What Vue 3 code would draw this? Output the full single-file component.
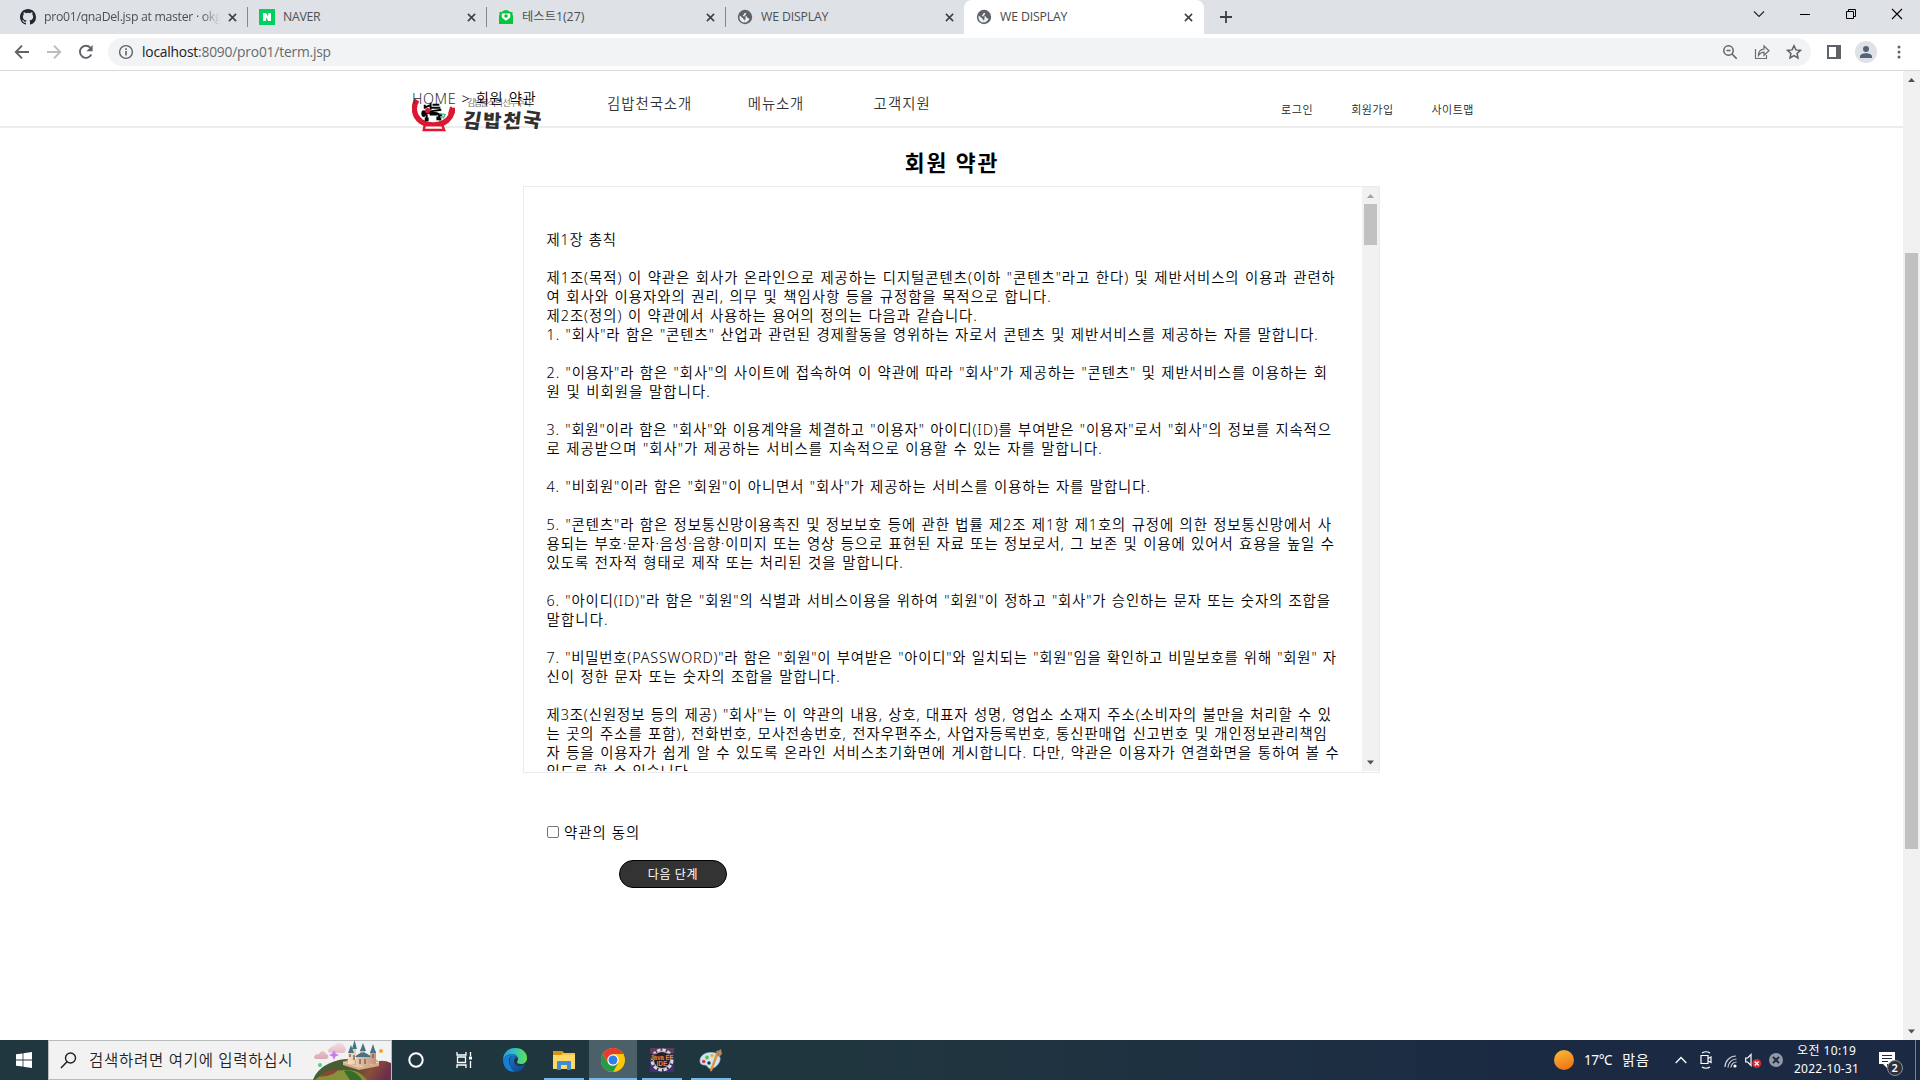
<script setup>
const tabs = [
  { icon: 'github', title: 'pro01/qnaDel.jsp at master · okg', width: 177, fade: true },
  { icon: 'naver', title: 'NAVER', width: 37 },
  { icon: 'mail', title: '테스트1(27)', width: 62 },
  { icon: 'globe', title: 'WE DISPLAY', width: 67 },
  { icon: 'globe', title: 'WE DISPLAY', width: 67, active: true },
]

const terms = [
  ['제1장 총칙', 70],
  ['', 0],
  ['제1조(목적) 이 약관은 회사가 온라인으로 제공하는 디지털콘텐츠(이하 "콘텐츠"라고 한다) 및 제반서비스의 이용과 관련하', 789],
  ['여 회사와 이용자와의 권리, 의무 및 책임사항 등을 규정함을 목적으로 합니다.', 505],
  ['제2조(정의) 이 약관에서 사용하는 용어의 정의는 다음과 같습니다.', 431],
  ['1. "회사"라 함은 "콘텐츠" 산업과 관련된 경제활동을 영위하는 자로서 콘텐츠 및 제반서비스를 제공하는 자를 말합니다.', 772],
  ['', 0],
  ['2. "이용자"라 함은 "회사"의 사이트에 접속하여 이 약관에 따라 "회사"가 제공하는 "콘텐츠" 및 제반서비스를 이용하는 회', 781],
  ['원 및 비회원을 말합니다.', 164],
  ['', 0],
  ['3. "회원"이라 함은 "회사"와 이용계약을 체결하고 "이용자" 아이디(ID)를 부여받은 "이용자"로서 "회사"의 정보를 지속적으', 785],
  ['로 제공받으며 "회사"가 제공하는 서비스를 지속적으로 이용할 수 있는 자를 말합니다.', 556],
  ['', 0],
  ['4. "비회원"이라 함은 "회원"이 아니면서 "회사"가 제공하는 서비스를 이용하는 자를 말합니다.', 604],
  ['', 0],
  ['5. "콘텐츠"라 함은 정보통신망이용촉진 및 정보보호 등에 관한 법률 제2조 제1항 제1호의 규정에 의한 정보통신망에서 사', 785],
  ['용되는 부호·문자·음성·음향·이미지 또는 영상 등으로 표현된 자료 또는 정보로서, 그 보존 및 이용에 있어서 효용을 높일 수', 788],
  ['있도록 전자적 형태로 제작 또는 처리된 것을 말합니다.', 357],
  ['', 0],
  ['6. "아이디(ID)"라 함은 "회원"의 식별과 서비스이용을 위하여 "회원"이 정하고 "회사"가 승인하는 문자 또는 숫자의 조합을', 784],
  ['말합니다.', 62],
  ['', 0],
  ['7. "비밀번호(PASSWORD)"라 함은 "회원"이 부여받은 "아이디"와 일치되는 "회원"임을 확인하고 비밀보호를 위해 "회원" 자', 790],
  ['신이 정한 문자 또는 숫자의 조합을 말합니다.', 294],
  ['', 0],
  ['제3조(신원정보 등의 제공) "회사"는 이 약관의 내용, 상호, 대표자 성명, 영업소 소재지 주소(소비자의 불만을 처리할 수 있', 785],
  ['는 곳의 주소를 포함), 전화번호, 모사전송번호, 전자우편주소, 사업자등록번호, 통신판매업 신고번호 및 개인정보관리책임', 781],
  ['자 등을 이용자가 쉽게 알 수 있도록 온라인 서비스초기화면에 게시합니다. 다만, 약관은 이용자가 연결화면을 통하여 볼 수', 793],
  ['있도록 할 수 있습니다.', 146],
]

// Tracks a single line of text so that it fills the given width.
const vFit = {
  mounted(el, { value }) {
    const count = [...el.textContent].length
    if (!value || !count) return
    const natural = el.getBoundingClientRect().width
    const current = parseFloat(getComputedStyle(el).letterSpacing) || 0
    el.style.letterSpacing = `${current + (value + 0.3 - natural) / count}px`
  },
}
</script>

<template>
  <div class="screen">
    <header class="tabstrip">
      <div v-for="(tab, i) in tabs" :key="i" class="tab" :class="{ active: tab.active, plain: i === 3 }">
        <svg v-if="tab.icon === 'github'" class="fav" viewBox="0 0 16 16"><path fill="#24292f" d="M8 0C3.58 0 0 3.58 0 8c0 3.54 2.29 6.53 5.47 7.59.4.07.55-.17.55-.38 0-.19-.01-.82-.01-1.49-2.01.37-2.53-.49-2.69-.94-.09-.23-.48-.94-.82-1.13-.28-.15-.68-.52-.01-.53.63-.01 1.08.58 1.23.82.72 1.21 1.87.87 2.33.66.07-.52.28-.87.51-1.07-1.78-.2-3.64-.89-3.64-3.95 0-.87.31-1.59.82-2.15-.08-.2-.36-1.02.08-2.12 0 0 .67-.21 2.2.82a7.6 7.6 0 0 1 4 0c1.53-1.04 2.2-.82 2.2-.82.44 1.1.16 1.92.08 2.12.51.56.82 1.27.82 2.15 0 3.07-1.87 3.75-3.65 3.95.29.25.54.73.54 1.48 0 1.07-.01 1.93-.01 2.2 0 .21.15.46.55.38A8.01 8.01 0 0 0 16 8c0-4.42-3.58-8-8-8z"/></svg>
        <svg v-else-if="tab.icon === 'naver'" class="fav" viewBox="0 0 16 16"><path fill="#03cf5d" d="M0 0h16v16H0z"/><path fill="#fff" d="M4 4h3l2.200 3.600V4H12v8H9.200L7 8.400V12H4z"/></svg>
        <svg v-else-if="tab.icon === 'mail'" class="fav" viewBox="0 0 16 16"><path fill="#03c63c" d="M1.500 3h2.200Q6 1 8 1t4.300 2h2.200v3l.5.500V15H1V6.500l.5-.5z"/><path d="M3.800 4.500h8.400v4L8 11.700 3.800 8.500z" fill="#fff"/><circle cx="8" cy="7" r="1.800" fill="#03c63c"/></svg>
        <svg v-else class="fav" viewBox="0 0 16 16"><circle cx="8" cy="8" r="7.200" fill="#5f6368"/><path fill="#eceef0" d="M9.500 2.300c0 1.400-.6 1.900-1.900 2-.9.200-.3 1.300-1.200 1.600-.8.300-.6 1.300.2 1.300h2.700c.9 0 .7 1.700 1.600 1.700.9 0 .9.800 1.700.9-.9 2.100-2.500 3.600-4.800 3.700-.2-1 .5-1.800-.2-2.500-.6-.6-1.500-.5-1.500-1.700L2.600 6.400c-.8 3.900 1.700 7.100 5.200 7.200z"/><path d="M9.500 2.300c2.600.7 4.200 3.100 4 5.700l-1.600.3c-.8-.2-.9-1.500-2.200-1.600H7.200l2.500-1.900z" fill="#5f6368"/></svg>
        <div class="tabtitle" :class="{ fade: tab.fade }"><span v-fit="tab.width" class="t">{{ tab.title }}</span></div>
        <svg class="close" viewBox="0 0 10 10"><path d="M1 1l8 8M9 1L1 9" stroke="#3c4043" stroke-width="1.700"/></svg>
      </div>
      <svg class="plus" viewBox="0 0 12 12"><path d="M6 0v12M0 6h12" stroke="#3c4043" stroke-width="1.800"/></svg>
      <div class="winctl">
        <svg viewBox="0 0 46 28"><path d="M18 11.500l5 5 5-5" fill="none" stroke="#222" stroke-width="1.100"/></svg>
        <svg viewBox="0 0 46 28"><path d="M18 14.500h10" stroke="#000"/></svg>
        <svg viewBox="0 0 46 28"><path d="M18.500 11.500h7v7h-7zM20.500 11.500v-2h7v7h-2" fill="none" stroke="#000"/></svg>
        <svg viewBox="0 0 46 28"><path d="M18 9l10 10M28 9L18 19" stroke="#000" stroke-width="1.100"/></svg>
      </div>
    </header>

    <div class="toolbar">
      <svg class="nav" viewBox="0 0 16 16"><path d="M15 8H2M8 1.700L1.800 8 8 14.300" fill="none" stroke="#5f6368" stroke-width="1.900"/></svg>
      <svg class="nav" viewBox="0 0 16 16"><path d="M1 8h13M8 1.700L14.200 8 8 14.300" fill="none" stroke="#babcbe" stroke-width="1.900"/></svg>
      <svg class="nav" viewBox="0 0 16 16"><path d="M13.300 10.500A6 6 0 1 1 12.300 3.700" fill="none" stroke="#5f6368" stroke-width="1.900"/><path d="M14.600 1v6.200H8.400z" fill="#5f6368"/></svg>
      <div class="omnibox">
        <svg class="info" viewBox="0 0 16 16"><circle cx="8" cy="8" r="6.400" fill="none" stroke="#5f6368" stroke-width="1.400"/><path d="M8 7v4.500M8 4.200v1.700" stroke="#5f6368" stroke-width="1.600"/></svg>
        <span v-fit="188.500" class="t url"><b>localhost</b>:8090/pro01/term.jsp</span>
        <div class="omniactions">
          <svg viewBox="0 0 16 16"><circle cx="6.500" cy="6.500" r="4.700" fill="none" stroke="#5f6368" stroke-width="1.500"/><path d="M10 10l4.700 4.700M4.500 6.500h4" stroke="#5f6368" stroke-width="1.600"/></svg>
          <svg viewBox="0 0 16 16"><path d="M1.500 5v9.500h11V11M4.500 11.500c0-4 2-6.200 5.500-6.400V2l5 4.700-5 4.600V8.200c-2.500 0-4 .8-5.500 3.300z" fill="none" stroke="#6b6f73" stroke-width="1.200"/></svg>
          <svg viewBox="0 0 16 16"><path d="M8 1.800l1.900 4.100 4.500.5-3.300 3.100.9 4.500L8 11.700 4 14l.9-4.500-3.300-3.100 4.500-.5z" fill="none" stroke="#5f6368" stroke-width="1.500"/></svg>
        </div>
      </div>
      <svg class="panel" viewBox="0 0 14 14"><path d="M1 1h12v12H1z" fill="#fff" stroke="#5f6368" stroke-width="2"/><path d="M9 0h5v14H9z" fill="#5f6368"/></svg>
      <svg class="avatar" viewBox="0 0 22 22"><circle cx="11" cy="11" r="11" fill="#dee1e6"/><circle cx="11" cy="8" r="3" fill="#56617a"/><path d="M5 17v-1.500C5 11 17 11 17 15.500V17z" fill="#56617a"/></svg>
      <svg class="dots" viewBox="0 0 4 14"><g fill="#5f6368"><circle cx="2" cy="2" r="1.500"/><circle cx="2" cy="7" r="1.500"/><circle cx="2" cy="12" r="1.500"/></g></svg>
    </div>

    <div class="viewport">
      <main class="page">
        <div class="sitebar">
          <div class="brand">
            <svg class="bowl" viewBox="0 0 44 36">
              <path d="M5 2C1 8 1 18 9 24c7 5 20 5 27-1 4-4 6-8 6-13" fill="none" stroke="#dc1730" stroke-width="5.500"/>
              <path d="M39 9l-2 7 4 3 3-9-2 3-1-4z" fill="#dc1730"/>
              <path d="M12 33l1-5h18l2 5z" fill="#fff" stroke="#dc1730" stroke-width="2.500"/>
              <path d="M13 7v4M13 10l6-3M19 5v7M21 7h7M20 10h9M17 14l13-2M14 16q8-3 17 2M15 17v6M27 16l2 7M18 17h8" fill="none" stroke="#050505" stroke-width="2"/>
              <ellipse cx="12" cy="16" rx="2.500" ry="3.500" fill="#050505"/><path d="M13 20h4v4h-4zM25 19h5v4h-5z" fill="#050505"/>
              <circle cx="16" cy="13" r="2.600" fill="#e21531"/><path d="M28 16l6 1-2 4M29 20l5-1" fill="none" stroke="#38b879" stroke-width="1.200"/>
            </svg>
            <div class="wordmark">
              <span v-fit="63" class="t slogan">김밥분식의 선두주자</span>
              <span class="brush"><i>김</i><i>밥</i><i>천</i><i>국</i></span>
            </div>
            <div class="crumb"><span v-fit="124" class="t"><em>HOME</em> &gt; 회원 약관</span></div>
          </div>
          <nav class="menu">
            <span v-fit="85" class="t">김밥천국소개</span>
            <span v-fit="56" class="t">메뉴소개</span>
            <span v-fit="57" class="t">고객지원</span>
          </nav>
          <nav class="account">
            <span v-fit="32" class="t">로그인</span>
            <span v-fit="42" class="t">회원가입</span>
            <span v-fit="42" class="t">사이트맵</span>
          </nav>
        </div>

        <section class="content">
          <h2><span v-fit="94" class="t">회원 약관</span></h2>
          <div class="terms">
            <div class="lines">
              <p v-for="(line, i) in terms" :key="i"><span v-fit="line[1]" class="t">{{ line[0] }}</span></p>
            </div>
            <div class="bar inner">
              <svg viewBox="0 0 17 17"><path d="M5 11l3.500-4 3.500 4z" fill="#a3a3a3"/></svg>
              <div class="thumb"></div>
              <svg class="end" viewBox="0 0 17 17"><path d="M5 6.500h7l-3.500 4z" fill="#505050"/></svg>
            </div>
          </div>
          <label class="agree"><i class="box"></i><span v-fit="76" class="t">약관의 동의</span></label>
          <button class="next"><span v-fit="50" class="t">다음 단계</span></button>
        </section>
      </main>
      <div class="bar outer">
        <svg viewBox="0 0 17 17"><path d="M5 11l3.500-4 3.500 4z" fill="#505050"/></svg>
        <div class="thumb"></div>
        <svg class="end" viewBox="0 0 17 17"><path d="M5 6.500h7l-3.500 4z" fill="#505050"/></svg>
      </div>
    </div>

    <footer class="taskbar">
      <div class="start"><svg viewBox="0 0 16 16"><path fill="#fff" d="M0 2.300l6.600-.9v6.100H0zM7.400 1.200L16 0v7.500H7.400zM0 8.400h6.600v6.200L0 13.700zM7.400 8.400H16V16l-8.600-1.200z"/></svg></div>
      <div class="search">
        <svg class="lens" viewBox="0 0 17 17"><circle cx="10.500" cy="6" r="5" fill="none" stroke="#222" stroke-width="1.400"/><path d="M7 9.800L1 16" stroke="#222" stroke-width="1.500"/></svg>
        <span v-fit="204" class="t">검색하려면 여기에 입력하십시</span>
        <svg class="art" viewBox="0 0 78 40">
          <defs>
            <linearGradient id="hill" x2="1" y2=".4"><stop offset="0" stop-color="#4a4b28"/><stop offset=".5" stop-color="#8a4f3a"/><stop offset="1" stop-color="#6d2e4a"/></linearGradient>
            <linearGradient id="cloud" y2="1" x2="0"><stop stop-color="#f2dfe3"/><stop offset="1" stop-color="#dca9b3"/></linearGradient>
            <linearGradient id="wall"><stop stop-color="#f4dfc6"/><stop offset="1" stop-color="#c1957a"/></linearGradient>
          </defs>
          <path d="M15 12c0-5 6-6 7-7 3-4 9-3 9 1 3 2 2 7-1 7H18zM1 18c0-4 4-4 5-4 2-4 6-3 7 0 3 0 3 5 0 5H3z" fill="url(#cloud)"/>
          <path d="M0 40C5 26 20 20 34 19l44 18v3z" fill="#485c35"/>
          <path d="M38 40c4-14 22-18 40-6v6z" fill="#8a4545"/>
          <path d="M2 40c8-8 25-12 40-9l19 9z" fill="#89903a"/>
          <path d="M7 37c4-6 12-8 18-7-4 5-11 6-18 7z" fill="#88492f"/><path d="M31 31c8-2 15 4 18 9H37z" fill="#356c27"/>
          <path d="M45 31q19-15 33-8v17H54z" fill="url(#hill)"/>
          <path d="M30 25v-3l5-2 28-1 3 3v4l-20 4z" fill="#d7ab8b"/><path d="M30 22l16 5 20-5" fill="none" stroke="#f0d2b4"/>
          <path d="M35 12h7v12h-7zM43 15h14v11H43zM57 11h6v13h-6zM47 9h5v9h-5zM39 8h4v7h-4z" fill="url(#wall)"/>
          <path d="M35 13l3-8 3 8zM39 9l2.500-9L44 9zM47 11l3-8 3 8zM57 13l3-9 3 9zM42 17q8-9 16 0z" fill="#437684"/>
          <path d="M37 14v3M41 15v5M47 19v5M52 19v5M60 14v4" stroke="#8d5144" stroke-width="1.300"/>
          <path d="M21 10l1.500 3.500 3.500 1.500-3.500 1.500L21 20l-1.500-3.500L16 15l3.500-1.500z" fill="#c47bec"/>
          <circle cx="7" cy="25" r="2" fill="#50d176"/><circle cx="68" cy="11" r="2" fill="#f5a61d"/>
        </svg>
      </div>
      <div class="task"><svg width="18" height="18" viewBox="0 0 18 18"><circle cx="9" cy="9" r="6.700" fill="none" stroke="#fff" stroke-width="2"/></svg></div>
      <div class="task"><svg width="18" height="18" viewBox="0 0 18 18"><path d="M2 1v3h9V1M2 17v-3h9v3M2.500 6h8v5.500h-8zM15.500 1v4M15.500 10v7" fill="none" stroke="#fff" stroke-width="1.300"/><path d="M14 5.500h3v3h-3z" fill="#fff"/></svg></div>
      <div class="task edge"><svg width="24" height="24" viewBox="0 0 24 24">
        <defs><linearGradient id="e1" x2="1"><stop stop-color="#249de0"/><stop offset=".5" stop-color="#31c5c0"/><stop offset="1" stop-color="#67de4e"/></linearGradient><linearGradient id="e2" y2="1" x2=".5"><stop stop-color="#1874c8"/><stop offset="1" stop-color="#114a91"/></linearGradient></defs>
        <path d="M0 12C0 5 5 0 12 0c8 0 12 5 12 10 0 4-3 6-6 6-3 0-4-1-4-2 0-1 1-1 1-3 0-3-3-5-6-5-5 0-8 3-9 6z" fill="url(#e1)"/>
        <path d="M0 12c1-4 5-6 9-6 3 0 5 2 5 4-1-1-2-2-4-2-3 0-4 3-4 5 0 6 5 9 9 9-8 5-15-2-15-10z" fill="#187ed0"/>
        <path d="M7 12c0-2 1-4 3-4 1 0 2 0 3 1-3 2-3 9 4 9 2 0 3-1 5-2-2 6-6 8-10 8-4-2-6-8-5-12z" fill="url(#e2)"/>
      </svg></div>
      <div class="task open"><svg width="22" height="19" viewBox="0 0 22 19"><path d="M0 0h9l2 2h11v16H0z" fill="#f6c544"/><path d="M0 0h9l1 2-2 2H0z" fill="#d9930a"/><path d="M0 4h22v14H0z" fill="#ffd968"/><path d="M4 19v-8q0-1 1-1h12q1 0 1 1v8h-4v-5H8v5z" fill="#3c8fd2"/></svg></div>
      <div class="task open current"><svg width="24" height="24" viewBox="0 0 24 24"><circle cx="12" cy="12" r="12" fill="#fbc70d"/><path d="M1.600 6A12 12 0 0 1 22.400 6H12L6.800 15z" fill="#e63b2e"/><path d="M1.600 6l5.200 9A6 6 0 0 0 14.500 17.500L12 24A12 12 0 0 1 1.600 6z" fill="#259b48"/><path d="M17.200 15L12 24l-3-6z" fill="#259b48"/><circle cx="12" cy="12" r="5.700" fill="#fff"/><circle cx="12" cy="12" r="4.500" fill="#317fe8"/></svg></div>
      <div class="task open"><svg width="24" height="24" viewBox="0 0 24 24"><path d="M0 0h24v24H0z" fill="#43306f"/><path d="M0 0h24v8H0z" fill="#5e3c62"/><circle cx="12" cy="12" r="10" fill="none" stroke="#d9d9dc" stroke-width="3" stroke-dasharray="3.500 1.730"/><circle cx="12" cy="12" r="8.500" fill="#221c28" stroke="#c5c5c9"/><path d="M0 5.500h24v6.500H0z" fill="#2b2030" opacity=".8"/><g fill="#f28727" font-family="Liberation Sans, sans-serif" font-weight="700"><text x=".5" y="11.500" font-size="7.500" textLength="23" lengthAdjust="spacingAndGlyphs">Java EE</text><text x="6.500" y="18" font-size="8" textLength="11" lengthAdjust="spacingAndGlyphs">IDE</text></g></svg></div>
      <div class="task open"><svg width="24" height="24" viewBox="0 0 24 24"><path d="M1 13C1 7 7 4 13 4.500c5 0 9 3.500 8 7.500-1 5-6 9-10 8.500-3-.5-2-3.500-5-3.500s-5-1-5-4z" fill="#cbe6f4" stroke="#8fc1da" stroke-width=".7"/><circle cx="4.700" cy="13.500" r="1.800" fill="#de3d3b"/><circle cx="8" cy="9.500" r="1.900" fill="#60b957"/><circle cx="13" cy="7.500" r="1.800" fill="#efb43c"/><circle cx="10" cy="15" r="1.700" fill="#223943"/><path d="M20 5l-7 18-1.500.5L11 22l6-17z" fill="#e29438"/><path d="M18 7l-1-4q3 0 5-2l1 5-3 3z" fill="#b6865d"/></svg></div>

      <div class="tray">
        <i class="sun"></i>
        <span class="t temp" v-fit="28">17°C</span>
        <span class="t mood" v-fit="27">맑음</span>
        <svg class="caret" viewBox="0 0 12 8"><path d="M.7 7L6 1.500 11.300 7" fill="none" stroke="#fff" stroke-width="1.300"/></svg>
        <svg class="cam" viewBox="0 0 12 18"><path d="M1 4.500h7v8H1zM8 7.500l3-1.500v5.500L8 10M2 2q4-2.500 8 0M2 16q4 2.500 8 0" fill="none" stroke="#fff" stroke-width="1.200"/></svg>
        <svg class="wifi" viewBox="0 0 13 13"><path d="M1 12C1 6 6 1 12 1M4 12.500c0-4.500 4-8.500 8.500-8.500M7 12.500c0-3 2.500-5.500 5.500-5.500" fill="none" stroke="#c9cdd4" stroke-width="1.200"/><circle cx="11" cy="11" r="1.600" fill="#fff"/></svg>
        <svg class="vol" viewBox="0 0 17 16"><path d="M.7 5h2L6 1.500v11L2.700 9h-2z" fill="none" stroke="#fff" stroke-width="1.200"/><circle cx="11.700" cy="10.500" r="4.500" fill="#da2534"/><path d="M9.700 8.500l4 4M13.700 8.500l-4 4" stroke="#fff" stroke-width="1.200"/></svg>
        <svg class="off" viewBox="0 0 14 14"><circle cx="7" cy="7" r="7" fill="#9298a4"/><path d="M4 4l6 6M10 4l-6 6" stroke="#1c2b42" stroke-width="1.900"/></svg>
        <div class="clock"><span class="t" v-fit="59">오전 10:19</span><span class="t" v-fit="65">2022-10-31</span></div>
        <div class="note">
          <svg viewBox="0 0 16 16"><path d="M0 0h16v12H8v4l-4-4H0z" fill="#fff"/><path d="M3 3.500h10M3 6.500h10M3 9.500h6" stroke="#1c2a42" stroke-width="1"/></svg>
          <b>2</b>
        </div>
        <i class="peek"></i>
      </div>
    </footer>
  </div>
</template>

<style>
body { margin: 0; overflow: hidden; }
</style>

<style scoped>
.screen { width: 1920px; height: 1080px; display: flex; flex-direction: column; overflow: hidden; background: #fff; font-family: "Noto Sans", "Noto Sans CJK KR", sans-serif; font-weight: 350; }
svg { display: block; flex: none; }
.t { display: inline-block; white-space: pre; flex: none; }

.tabstrip { height: 34px; background: #dee1e6; display: flex; align-items: center; padding-left: 8px; flex: none; }
.tab { width: 239px; height: 34px; box-sizing: border-box; padding: 0 10px 0 12px; display: flex; align-items: center; position: relative; font-family: "Open Sans", "Noto Sans CJK KR", sans-serif; font-weight: 400; font-size: 12.300px; color: #4c5054; }
.tab:not(.active):not(.plain)::after { content: ""; position: absolute; right: -1px; top: 7px; width: 1px; height: 20px; background: #85888c; }
.tab.active { background: #fff; border-radius: 8px 8px 0 0; width: 240px; padding-right: 11px; color: #45494c; }
.fav { width: 16px; height: 16px; }
.tabtitle { flex: 1; margin-left: 8px; overflow: hidden; line-height: 20px; display: flex; }
.fade { -webkit-mask-image: linear-gradient(90deg, #000 158px, transparent 176px); mask-image: linear-gradient(90deg, #000 158px, transparent 176px); }
.close { width: 9px; height: 9px; }
.plus { width: 12px; height: 12px; margin-left: 16px; }
.winctl { margin-left: auto; display: flex; height: 28px; align-self: flex-start; }
.winctl svg { width: 46px; height: 28px; }

.toolbar { height: 37px; border-bottom: 1px solid #d9dadc; box-sizing: border-box; display: flex; align-items: center; padding-left: 14px; background: #fff; flex: none; }
.nav { width: 16px; height: 16px; margin-right: 16px; }
.omnibox { height: 28px; width: 1703px; margin-left: -2px; border-radius: 14px; background: #f1f3f4; display: flex; align-items: center; box-sizing: border-box; padding: 0 9px 0 10px; }
.info { width: 16px; height: 16px; margin-right: 8px; }
.url { font-family: "Open Sans", sans-serif; font-weight: 400; font-size: 13.800px; color: #666a6e; line-height: 20px; }
.url b { font-weight: inherit; color: #202124; }
.omniactions { margin-left: auto; display: flex; gap: 16px; }
.omniactions svg { width: 16px; height: 16px; }
.panel { width: 14px; height: 14px; margin-left: 16px; }
.avatar { width: 22px; height: 22px; margin-left: 14px; }
.dots { width: 4px; height: 14px; margin-left: 20px; }

.viewport { height: 969px; display: flex; flex: none; }
.page { flex: 1; overflow: hidden; }
.sitebar { height: 57px; box-sizing: border-box; border-bottom: 2px solid #ececec; display: flex; padding-left: 412px; }
.brand { width: 195px; display: flex; position: relative; height: 63px; padding-top: 27px; box-sizing: border-box; flex: none; }
.bowl { width: 43px; height: 35px; }
.wordmark { margin-left: 8px; width: 80px; }
.slogan { font-size: 9px; line-height: 10px; display: block; width: max-content; margin-left: 4px; color: #777; font-weight: 400; }
.brush { display: flex; width: 80px; height: 24px; align-items: center; color: #303030; font: 900 20px/24px "Noto Sans CJK KR", sans-serif; }
.brush i { width: 20px; display: block; transform: rotate(6deg) skewX(-4deg); font-style: normal; }
.brush i:nth-child(2) { transform: rotate(3deg) scaleY(.9); }
.brush i:nth-child(3) { transform: rotate(-2deg) scaleY(.94) skewX(-8deg); }
.brush i:nth-child(4) { transform: translateY(-1px) rotate(9deg) scaleY(.95); }
.crumb { position: absolute; left: 0; top: 18px; font-size: 14.400px; line-height: 20px; color: #000; word-spacing: 1px; }
.crumb em { font-style: normal; color: #333; }
.menu { display: flex; gap: 0; padding-top: 23px; font-size: 14.400px; line-height: 20px; color: #333; }
.menu .t:nth-child(1) { margin-right: 55.500px; }
.menu .t:nth-child(2) { margin-right: 69.500px; }
.account { display: flex; gap: 38px; margin-left: 350px; padding-top: 31px; font-size: 11px; line-height: 16px; color: #222; }

.content { width: 857px; margin-left: 523px; }
h2 { margin: 0; height: 58px; display: flex; justify-content: center; align-items: center; box-sizing: border-box; padding: 12px 0 0 1px; font-size: 21.600px; line-height: 30px; font-weight: 700; color: #000; }
.terms { height: 587px; box-sizing: border-box; border: 1px solid #ebebeb; display: flex; justify-content: space-between; padding-bottom: 1px; }
.lines { padding: 43px 0 0 22.500px; height: 584px; box-sizing: border-box; overflow: hidden; font-size: 14.400px; line-height: 19px; color: #000; word-spacing: .8px; }
.lines p { margin: 0; height: 19px; }
.bar { width: 17px; background: #f1f1f1; display: flex; flex-direction: column; flex: none; }
.bar svg { width: 17px; height: 17px; }
.thumb { width: 13px; margin-left: 2px; background: #c1c1c1; }
.end { margin-top: auto; }
.inner { height: 584px; }
.inner .thumb { height: 41px; }
.outer .thumb { margin-top: 165px; height: 596px; }
.agree { display: flex; align-items: center; margin: 49px 0 0 24px; height: 20px; font-size: 14.400px; line-height: 20px; color: #000; width: max-content; }
.agree .t { padding-top: 1px; }
.box { width: 12px; height: 12px; box-sizing: border-box; border: 1px solid #767676; border-radius: 2px; margin-right: 5px; }
.next { display: flex; align-items: center; justify-content: center; width: 108px; height: 28px; padding: 0; margin: 18px 0 0 96px; border: 1px solid #000; border-radius: 14px; background: #333; color: #fff; font: 400 12px/18px "Noto Sans CJK KR", sans-serif; }

.taskbar { height: 40px; display: flex; background: linear-gradient(90deg, #20373f, #20363f 45%, #1b2a43 80%, #1b2942); color: #fff; }
.start { width: 48px; display: flex; align-items: center; justify-content: center; }
.start svg { width: 16px; height: 16px; }
.search { width: 344px; height: 40px; box-sizing: border-box; border: 1px solid #b9bcbd; background: #f2f2f2; color: #222; display: flex; align-items: center; font-size: 15.500px; line-height: 22px; padding-left: 11px; flex: none; }
.lens { width: 17px; height: 17px; margin-right: 12px; }
.art { width: 78px; height: 40px; margin-left: auto; }
.task { width: 48px; height: 40px; display: flex; align-items: center; justify-content: center; box-sizing: border-box; position: relative; flex: none; }
.task.edge { margin-left: 3px; }
.task.open::after { content: ""; position: absolute; left: 4px; right: 4px; bottom: 0; height: 2px; background: #76b9ed; }
.task.open { margin-left: 1px; }
.task.current { background: #4b6069; }
.task.current::after { left: 0; right: 0; }
.tray { margin-left: auto; width: 366px; display: flex; align-items: center; flex: none; }
.sun { width: 20px; height: 20px; border-radius: 50%; background: linear-gradient(160deg, #f8bd38, #ee6b10); margin-right: 10px; }
.temp, .mood { font-size: 14px; line-height: 20px; font-weight: 400; }
.temp { font-size: 13.500px; }
.mood { margin-left: 10px; }
.caret { width: 12px; height: 8px; margin-left: 25px; }
.cam { width: 12px; height: 18px; margin-left: 13px; }
.wifi { width: 13px; height: 13px; margin-left: 12px; margin-top: 2px; }
.vol { width: 17px; height: 16px; margin-left: 8px; margin-top: 2px; }
.off { width: 14px; height: 14px; margin-left: 7px; }
.clock { width: 66px; margin-left: 11px; display: flex; flex-direction: column; align-items: center; font-size: 12px; line-height: 18px; font-weight: 400; }
.note { width: 16px; height: 16px; margin-left: 19px; position: relative; }
.note svg { width: 16px; height: 16px; }
.note b { position: absolute; left: 8px; top: 8px; width: 16px; height: 16px; box-sizing: border-box; border: 1px solid #8d9299; border-radius: 50%; background: #2d3138; font-size: 11px; line-height: 14px; text-align: center; font-weight: 600; }
.peek { width: 1px; height: 40px; margin-left: 20px; background: #78808d; }
</style>
